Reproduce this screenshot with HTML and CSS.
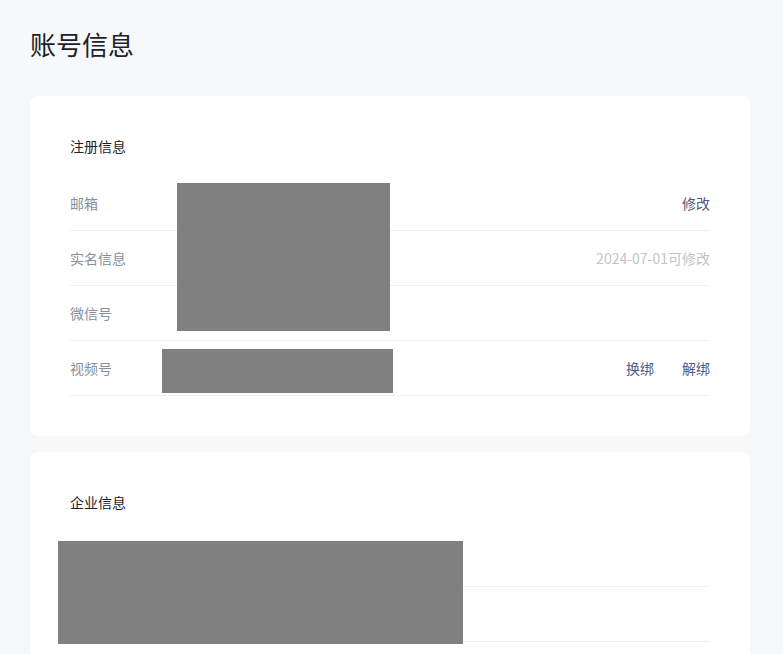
FILE: index.html
```html
<!DOCTYPE html>
<html lang="zh-CN">
<head>
<meta charset="utf-8">
<title>账号信息</title>
<link rel="stylesheet" href="styles.css">
</head>
<body>
<div class="page">
  <h1 class="page-title">账号信息</h1>

  <section class="card">
    <h2 class="card-title">注册信息</h2>
    <div class="rows">
      <div class="row">
        <span class="label">邮箱</span>
        <span class="actions"><a class="link">修改</a></span>
      </div>
      <div class="row">
        <span class="label">实名信息</span>
        <span class="actions"><span class="muted">2024-07-01可修改</span></span>
      </div>
      <div class="row">
        <span class="label">微信号</span>
        <span class="actions"></span>
      </div>
      <div class="row">
        <span class="label">视频号</span>
        <span class="actions"><a class="link">换绑</a><a class="link">解绑</a></span>
      </div>
    </div>
    <div class="redact redact-a"></div>
    <div class="redact redact-b"></div>
  </section>

  <section class="card">
    <h2 class="card-title">企业信息</h2>
    <div class="rows">
      <div class="row"><span class="label"></span></div>
      <div class="row"><span class="label"></span></div>
    </div>
    <div class="redact redact-c"></div>
  </section>
</div>
</body>
</html>
```

FILE: styles.css
```css
* { box-sizing: border-box; }
html, body {
  margin: 0;
  padding: 0;
  background: #f7f8fa;
  font-family: "Noto Sans CJK SC", "Noto Sans", sans-serif;
  color: #1d2129;
  overflow: hidden;
}
.page {
  padding: 24px 33px 0 30px;
  display: flex;
  flex-direction: column;
  gap: 16px;
}
.page-title {
  margin: 0 0 16px 0;
  font-size: 26px;
  font-weight: 400;
  line-height: 40px;
  color: #1d2129;
}
.card {
  position: relative;
  background: #fff;
  border-radius: 8px;
  padding: 40px 40px 40px 40px;
}
.card-title {
  margin: 0 0 20px 0;
  font-size: 14px;
  font-weight: 400;
  line-height: 20px;
  color: #1d2129;
}
.rows {
  display: flex;
  flex-direction: column;
}
.row {
  height: 55px;
  display: flex;
  align-items: center;
  justify-content: space-between;
  border-bottom: 1px solid #f0f1f3;
  font-size: 14px;
  line-height: 20px;
}
.label {
  color: #86909c;
}
.actions {
  display: flex;
  gap: 28px;
}
.link {
  color: #4e5a82;
  cursor: pointer;
}
.muted {
  color: #c0c4cc;
}
.redact {
  position: absolute;
  background: #808080;
}
.redact-a { left: 147px; top: 87px; width: 213px; height: 148px; }
.redact-b { left: 132px; top: 253px; width: 231px; height: 44px; }
.redact-c { left: 28px; top: 89px; width: 405px; height: 103px; }
```
